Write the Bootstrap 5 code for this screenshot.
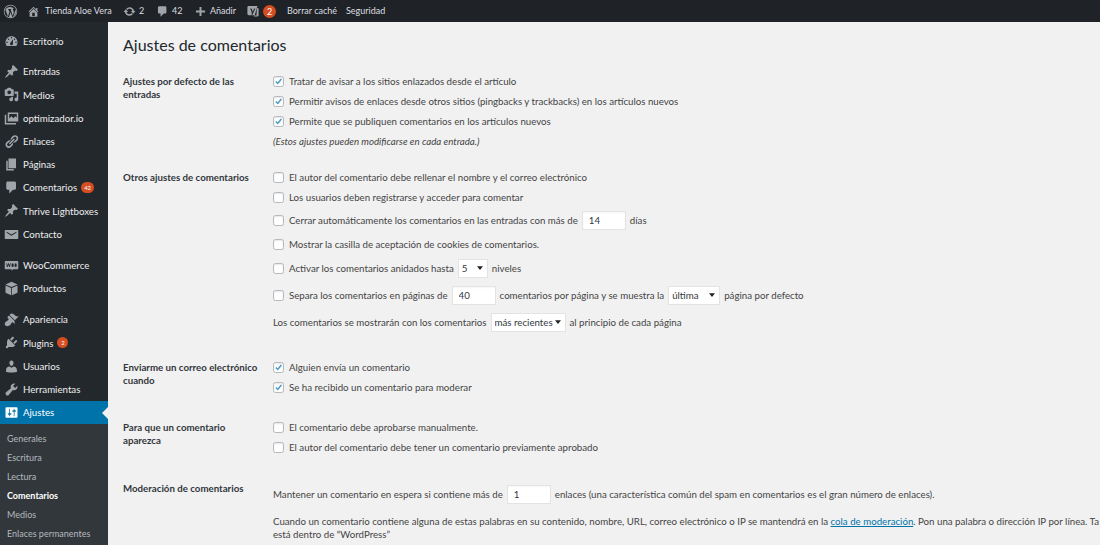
<!DOCTYPE html>
<html lang="es">
<head>
    <meta charset="UTF-8">
    <meta name="viewport" content="width=device-width, initial-scale=1.0">
    <title>Ajustes de comentarios</title>
    <link href="https://cdn.jsdelivr.net/npm/bootstrap@5.3.0/dist/css/bootstrap.min.css" rel="stylesheet">
    <style>
        html, body { height: 100%; overflow: hidden; }
        body { background: #f1f1f1; font-family: Lato, Roboto, sans-serif; font-size: 9.7px; color: #444; line-height: 1.3; }
        svg { fill: currentColor; flex: none; }

        /* top bar */
        .wp-bar { height: 22px; background: #1f2327; color: #dcdee0; padding-left: 3px; white-space: nowrap; font-size: 9px; }
        .wp-bar svg { color: #a0a5aa; }
        .bar-home { margin-left: 9px; }
        .bar-site { margin-left: 5px; width: 78px; }
        .bar-count { margin-left: 3px; width: 17px; }
        .bar-count2 { margin-left: 3px; width: 22px; }
        .bar-add { margin-left: 3px; width: 36px; }
        .bar-cache { margin-left: 11px; width: 59px; }
        .bubble { background: #d54e21; color: #fff; border-radius: 50%; width: 13px; height: 13px; font-size: 9px; line-height: 13px; text-align: center; margin-left: 3px; }

        /* sidebar */
        .wp-side { width: 108px; flex: none; background: #23282d; color: #eee; padding-top: 8px; }
        .side-item { height: 23.2px; padding-left: 4px; gap: 4px; }
        .side-item svg { color: #a0a5aa; width: 15px; height: 15px; }
        .side-sep { margin-top: 7px; }
        .side-sep-wide { margin-top: 8px; }
        .side-now { background: #0073aa; color: #fff; position: relative; }
        .side-now svg { color: #fff; }
        .side-now::after { content: ""; position: absolute; right: 0; top: 6px; border: 6px solid transparent; border-left-width: 0; border-right-color: #f1f1f1; }
        .side-sub { background: #32373c; color: #b4b9be; padding: 5px 0 20px 7px; font-size: 9px; }
        .side-sub div { height: 19px; line-height: 19px; }
        .side-sub .sub-now { color: #fff; font-weight: 700; }
        .count-pill { background: #d54e21; color: #fff; border-radius: 7px; font-size: 6px; height: 11px; line-height: 11px; padding: 0 3px; min-width: 11px; text-align: center; }

        /* content */
        .wp-main { padding-left: 15px; min-width: 0; flex: 1; overflow: hidden; }
        .wp-title { font-size: 16px; font-weight: 400; color: #23282d; margin: 13px 0 16px; line-height: 20px; }
        .set-label { width: 150px; flex: none; font-weight: 700; color: #32373c; padding: 4px 12px 0 0; line-height: 13px; }
        .gap-16 { margin-bottom: 16px; }
        .gap-22 { margin-bottom: 22px; }
        .gap-20 { margin-bottom: 20px; }
        .gap-21 { margin-bottom: 21px; }
        .opt { height: 20px; white-space: nowrap; }
        .opt-22 { height: 22px; }
        .opt-26 { height: 26px; }
        .opt-28 { height: 28px; }
        .opt-32 { height: 32px; }
        .opt-note { font-style: italic; }
        .box { width: 11px; height: 11px; margin: 0 5px 0 0; flex: none; border: 1px solid #b4b9be; border-radius: 0; box-shadow: inset 0 1px 2px rgba(0,0,0,.1); }
        .box:checked { background-color: #fff; border-color: #b4b9be; background-image: url("data:image/svg+xml,%3csvg xmlns='http://www.w3.org/2000/svg' viewBox='0 0 12 12'%3e%3cpath fill='none' stroke='%234a9cc5' stroke-width='2' d='M2.5 6l2.5 2.6L9.8 2.6'/%3e%3c/svg%3e"); }
        .num { height: 19px; border: 1px solid #e3e3e3; background: #fff; color: #32373c; font: inherit; padding: 0 6px; margin: 0 4px; border-radius: 0; box-shadow: inset 0 1px 2px rgba(0,0,0,.04); }
        .num-44 { width: 44px; }
        .pick { height: 19px; border: 1px solid #e3e3e3; border-radius: 0; color: #32373c; font: inherit; padding: 0 8px 0 3px; margin: 0 4px; background-size: 6px 4px; background-position: right 4px center; background-image: url("data:image/svg+xml,%3csvg xmlns='http://www.w3.org/2000/svg' viewBox='0 0 8 5'%3e%3cpath fill='%23222' d='M0 0h8L4 5z'/%3e%3c/svg%3e"); }
        .pick-30 { width: 30px; }
        .pick-52 { width: 52px; }
        .pick-75 { width: 75px; }
        .para-text { white-space: nowrap; margin: 4.5px 0 0; line-height: 13px; }
        .para-text a { color: #0073aa; }
    </style>
</head>
<body>
    <!-- icon set -->
    <svg width="0" height="0" class="d-block">
        <symbol id="i-wp" viewBox="0 0 20 20"><path fill-rule="evenodd" d="M10 1a9 9 0 1 1 0 18a9 9 0 0 1 0-18zm0 1a8 8 0 1 0 0 16a8 8 0 0 0 0-16zM3.200 7.200l3.400 9.300 2-5.900-1.100-3.100-1-.1v-.8h4.700v.8l-1 .1 2.800 8.200.9-2.800c.5-1.500.6-2.300.3-3.200-.3-.9-1-1.300-1-2.200 0-.9.700-1.500 1.500-1.500A7.500 7.500 0 0 0 3.200 7.200zM10.100 11l-2.200 6.400a7.500 7.500 0 0 0 4.500-.1zM16.400 6.500c.3 2-.2 3.400-.7 4.900l-2.100 5.500a7.500 7.500 0 0 0 2.800-10.400z"/></symbol>
        <symbol id="i-home" viewBox="0 0 20 20"><path d="M16 8.500l1.530 1.530-1.060 1.060L10 4.620l-6.470 6.470-1.060-1.060L10 2.500l4 4v-2h2v4zm-6-2.460l6 5.990V18H4v-5.970zM12 17v-5H8v5h4z"/></symbol>
        <symbol id="i-update" viewBox="0 0 20 20"><path d="M10.200 3.280c3.530 0 6.430 2.610 6.920 6h2.080l-3.500 4-3.500-4h2.320a4.439 4.439 0 0 0-4.320-3.450c-1.450 0-2.730.71-3.540 1.780L4.950 5.660a6.965 6.965 0 0 1 5.250-2.380zm-.4 13.440c-3.520 0-6.430-2.610-6.920-6H.8l3.500-4c1.170 1.330 2.330 2.670 3.500 4H5.480a4.439 4.439 0 0 0 4.320 3.450c1.450 0 2.730-.71 3.540-1.780l1.710 1.950a6.950 6.950 0 0 1-5.250 2.380z"/></symbol>
        <symbol id="i-comment" viewBox="0 0 20 20"><path d="M5 2h9c1.100 0 2 .9 2 2v7c0 1.100-.9 2-2 2h-2l-5 5v-5H5c-1.100 0-2-.9-2-2V4c0-1.100.9-2 2-2z"/></symbol>
        <symbol id="i-plus" viewBox="0 0 20 20"><path d="M17 8.500v3h-5.500V17h-3v-5.500H3v-3h5.500V3h3v5.500z"/></symbol>
        <symbol id="i-yoast" viewBox="0 0 20 20"><path d="M4 3h12.500l-1 2.500-3 10.500H4a2 2 0 0 1-2-2V5a2 2 0 0 1 2-2zm2 3.500l2.500 6.500-.8 2.500h1.600l3.900-9h-1.700l-1.800 4.700-1.800-4.700zM15.500 6H18v10a2 2 0 0 1-2 2h-5l.5-1.500H15z"/></symbol>
        <symbol id="i-dash" viewBox="0 0 20 20"><path d="M3.760 16h12.480c1.100-1.370 1.760-3.110 1.760-5 0-4.420-3.580-8-8-8s-8 3.580-8 8c0 1.890.66 3.630 1.760 5zM10 4c.55 0 1 .45 1 1s-.45 1-1 1-1-.45-1-1 .45-1 1-1zM6 6c.55 0 1 .45 1 1s-.45 1-1 1-1-.45-1-1 .45-1 1-1zm8 0c.55 0 1 .45 1 1s-.45 1-1 1-1-.45-1-1 .45-1 1-1zm-5.370 5.550L12 7v6c0 1.100-.9 2-2 2s-2-.9-2-2c0-.57.24-1.080.63-1.450zM4 10c.55 0 1 .45 1 1s-.45 1-1 1-1-.45-1-1 .45-1 1-1zm12 0c.55 0 1 .45 1 1s-.45 1-1 1-1-.45-1-1 .45-1 1-1z"/></symbol>
        <symbol id="i-pin" viewBox="0 0 20 20"><path d="M10.440 3.020l1.820-1.820 6.360 6.350-1.830 1.820c-1.050-.68-2.480-.57-3.410.36l-.75.75c-.92.93-1.040 2.350-.35 3.410l-1.830 1.820-2.410-2.410-2.800 2.790c-.42.42-3.380 2.710-3.800 2.290s1.860-3.390 2.280-3.810l2.790-2.790L4.100 9.360l1.830-1.820c1.050.69 2.480.57 3.400-.36l.75-.75c.93-.92 1.050-2.350.36-3.410z"/></symbol>
        <symbol id="i-media" viewBox="0 0 20 20"><path d="M13 11V4c0-.55-.45-1-1-1h-1.670L9 1H5L3.670 3H2c-.55 0-1 .45-1 1v7c0 .55.45 1 1 1h10c.55 0 1-.45 1-1zM7 4.500c1.380 0 2.500 1.120 2.500 2.500S8.380 9.500 7 9.500 4.500 8.380 4.500 7 5.620 4.500 7 4.500zM14 6h5v10.500c0 1.380-1.120 2.500-2.500 2.500S14 17.880 14 16.500s1.120-2.500 2.500-2.500c.17 0 .34.020.5.050V9h-3V6zm-4 8.050V13h2v3.500c0 1.380-1.120 2.500-2.500 2.500S7 17.880 7 16.500 8.120 14 9.500 14c.17 0 .34.020.5.050z"/></symbol>
        <symbol id="i-image" viewBox="0 0 20 20"><path d="M5 2h14v12H5zm2 2v6l3-3 2.500 2.500L15 7l2 2V4zM1 5h2v11h13v2H1z"/></symbol>
        <symbol id="i-link" viewBox="0 0 20 20"><path d="M17.740 2.760c1.680 1.690 1.680 4.410 0 6.100l-1.530 1.520c-1.120 1.120-2.700 1.470-4.140 1.090l2.620-2.610.76-.77.76-.76c.84-.84.84-2.200 0-3.040-.84-.85-2.200-.85-3.040 0l-.77.76-3.380 3.380c-.37-1.440-.02-3.020 1.100-4.140l1.520-1.530c1.690-1.680 4.420-1.680 6.100 0zM8.590 13.430l5.340-5.340c.42-.42.42-1.100 0-1.520-.44-.43-1.130-.39-1.530 0l-5.330 5.340c-.42.42-.42 1.100 0 1.520.44.43 1.130.39 1.520 0zm-.76 2.290l4.140-4.150c.38 1.440.03 3.020-1.090 4.140l-1.520 1.530c-1.690 1.680-4.410 1.680-6.100 0-1.680-1.680-1.680-4.420 0-6.100l1.530-1.520c1.120-1.120 2.700-1.470 4.140-1.100l-4.140 4.150c-.85.84-.85 2.200 0 3.050.84.84 2.200.84 3.040 0z"/></symbol>
        <symbol id="i-page" viewBox="0 0 20 20"><path d="M6 15V2h10v13H6zm-1 1h8v2H3V5h2v11z"/></symbol>
        <symbol id="i-mail" viewBox="0 0 20 20"><path fill-rule="evenodd" d="M2 4h16a1 1 0 0 1 1 1v10a1 1 0 0 1-1 1H2a1 1 0 0 1-1-1V5a1 1 0 0 1 1-1zm1.500 2.200v1.500L10 11.500l6.500-3.800V6.200L10 10z"/></symbol>
        <symbol id="i-woo" viewBox="0 0 20 20"><path fill-rule="evenodd" d="M2 4h16a1 1 0 0 1 1 1v9a1 1 0 0 1-1 1h-6l-1.500 2L10 15H2a1 1 0 0 1-1-1V5a1 1 0 0 1 1-1zm1 3l1 5h1l1-3 1 3h1l1-5H8l-.6 3-1-3h-.8l-1 3L4 7zm8.500 0a1.500 2.500 0 1 0 0 5 1.500 2.500 0 0 0 0-5zm4 0a1.500 2.500 0 1 0 0 5 1.500 2.500 0 0 0 0-5z"/></symbol>
        <symbol id="i-box" viewBox="0 0 20 20"><path d="M10 1l8 3.500-8 3.500-8-3.500zM2 6l7.500 3.300V19L2 15.500zm16 0v9.500L10.500 19V9.300z"/></symbol>
        <symbol id="i-brush" viewBox="0 0 20 20"><path d="M14.480 11.060L7.410 3.990l1.500-1.500c.5-.56 2.300-.47 3.510.32 1.210.8 1.430 1.280 2.910 2.100 1.180.64 2.450 1.260 4.450.85zm-.71.71L6.700 4.700 4.930 6.470c-.39.39-.39 1.020 0 1.410l1.060 1.060c.39.39.39 1.030 0 1.420-.6.6-1.430 1.110-2.210 1.690-.35.26-.7.53-1.010.84C1.430 13.230.2 16.300 2 18s4.770.57 6.110-.77c.31-.31.58-.66.84-1.010.58-.78 1.090-1.610 1.690-2.210.39-.39 1.020-.39 1.410 0l1.060 1.060c.39.39 1.020.39 1.410 0z"/></symbol>
        <symbol id="i-plug" viewBox="0 0 20 20"><path d="M13.110 4.360L9.870 7.600 8 5.730l3.240-3.240c.35-.34 1.050-.2 1.560.32.52.51.66 1.210.31 1.550zm-8 1.770l.91-1.120 9.010 9.010-1.190.84c-.71.71-2.630 1.160-3.820 1.160H6.140L4.900 17.260c-.59.59-1.540.59-2.120 0-.59-.58-.59-1.530 0-2.120l1.240-1.240v-3.880c0-1.130.4-3.190 1.090-3.890zm7.260 3.970l3.240-3.240c.34-.35 1.040-.21 1.550.31.52.51.66 1.210.31 1.550l-3.240 3.250z"/></symbol>
        <symbol id="i-user" viewBox="0 0 20 20"><path d="M10 9.250c-2.270 0-2.730-3.440-2.730-3.440C7 4.020 7.820 2 9.970 2c2.160 0 2.980 2.020 2.710 3.810 0 0-.41 3.440-2.680 3.440zm0 2.570L12.720 10c2.390 0 4.520 2.330 4.520 4.530v2.490s-3.650 1.130-7.240 1.130c-3.650 0-7.240-1.130-7.240-1.130v-2.490c0-2.250 1.940-4.480 4.470-4.480z"/></symbol>
        <symbol id="i-tool" viewBox="0 0 20 20"><path d="M16.680 9.770c-1.340 1.340-3.300 1.670-4.950.99l-5.410 6.520c-.99.99-2.590.99-3.580 0s-.99-2.590 0-3.570l6.520-5.420c-.68-1.650-.35-3.610.99-4.950 1.280-1.280 3.120-1.620 4.720-1.060l-2.890 2.890 2.820 2.820 2.860-2.870c.53 1.580.18 3.390-1.080 4.650z"/></symbol>
        <symbol id="i-set" viewBox="0 0 20 20"><path d="M18 16V4c0-.55-.45-1-1-1H3c-.55 0-1 .45-1 1v12c0 .55.45 1 1 1h14c.55 0 1-.45 1-1zM8 11h1c.55 0 1 .45 1 1s-.45 1-1 1H8v1.500c0 .28-.22.5-.5.5s-.5-.22-.5-.5V13H6c-.55 0-1-.45-1-1s.45-1 1-1h1V5.500c0-.28.22-.5.5-.5s.5.22.5.5V11zm5-2h-1c-.55 0-1-.45-1-1s.45-1 1-1h1V5.500c0-.28.22-.5.5-.5s.5.22.5.5V7h1c.55 0 1 .45 1 1s-.45 1-1 1h-1v5.500c0 .28-.22.5-.5.5s-.5-.22-.5-.5V9z"/></symbol>
    </svg>

    <!-- Top bar -->
    <div class="wp-bar d-flex align-items-center">
        <svg width="15" height="15"><use href="#i-wp"/></svg>
        <svg class="bar-home" width="13" height="13"><use href="#i-home"/></svg>
        <span class="bar-site">Tienda Aloe Vera</span>
        <svg width="13" height="13"><use href="#i-update"/></svg>
        <span class="bar-count">2</span>
        <svg width="13" height="13"><use href="#i-comment"/></svg>
        <span class="bar-count2">42</span>
        <svg width="13" height="13"><use href="#i-plus"/></svg>
        <span class="bar-add">Añadir</span>
        <svg width="14" height="14"><use href="#i-yoast"/></svg>
        <span class="bubble">2</span>
        <span class="bar-cache">Borrar caché</span>
        <span>Seguridad</span>
    </div>

    <div class="d-flex">
        <!-- Sidebar -->
        <div class="wp-side">
            <div class="side-item d-flex align-items-center"><svg><use href="#i-dash"/></svg>Escritorio</div>
            <div class="side-item side-sep d-flex align-items-center"><svg><use href="#i-pin"/></svg>Entradas</div>
            <div class="side-item d-flex align-items-center"><svg><use href="#i-media"/></svg>Medios</div>
            <div class="side-item d-flex align-items-center"><svg><use href="#i-image"/></svg>optimizador.io</div>
            <div class="side-item d-flex align-items-center"><svg><use href="#i-link"/></svg>Enlaces</div>
            <div class="side-item d-flex align-items-center"><svg><use href="#i-page"/></svg>Páginas</div>
            <div class="side-item d-flex align-items-center"><svg><use href="#i-comment"/></svg>Comentarios <span class="count-pill">42</span></div>
            <div class="side-item d-flex align-items-center"><svg><use href="#i-pin"/></svg>Thrive Lightboxes</div>
            <div class="side-item d-flex align-items-center"><svg><use href="#i-mail"/></svg>Contacto</div>
            <div class="side-item side-sep-wide d-flex align-items-center"><svg><use href="#i-woo"/></svg>WooCommerce</div>
            <div class="side-item d-flex align-items-center"><svg><use href="#i-box"/></svg>Productos</div>
            <div class="side-item side-sep-wide d-flex align-items-center"><svg><use href="#i-brush"/></svg>Apariencia</div>
            <div class="side-item d-flex align-items-center"><svg><use href="#i-plug"/></svg>Plugins <span class="count-pill">2</span></div>
            <div class="side-item d-flex align-items-center"><svg><use href="#i-user"/></svg>Usuarios</div>
            <div class="side-item d-flex align-items-center"><svg><use href="#i-tool"/></svg>Herramientas</div>
            <div class="side-item side-now d-flex align-items-center"><svg><use href="#i-set"/></svg>Ajustes</div>
            <div class="side-sub">
                <div>Generales</div>
                <div>Escritura</div>
                <div>Lectura</div>
                <div class="sub-now">Comentarios</div>
                <div>Medios</div>
                <div>Enlaces permanentes</div>
            </div>
        </div>

        <!-- Main Content -->
        <div class="wp-main">
            <h1 class="wp-title">Ajustes de comentarios</h1>

            <div class="gap-16 d-flex">
                <div class="set-label">Ajustes por defecto de las entradas</div>
                <div>
                    <div class="opt d-flex align-items-center"><input class="box form-check-input" type="checkbox" checked>Tratar de avisar a los sitios enlazados desde el artículo</div>
                    <div class="opt d-flex align-items-center"><input class="box form-check-input" type="checkbox" checked>Permitir avisos de enlaces desde otros sitios (pingbacks y trackbacks) en los artículos nuevos</div>
                    <div class="opt d-flex align-items-center"><input class="box form-check-input" type="checkbox" checked>Permite que se publiquen comentarios en los artículos nuevos</div>
                    <div class="opt opt-note d-flex align-items-center">(Estos ajustes pueden modificarse en cada entrada.)</div>
                </div>
            </div>

            <div class="gap-22 d-flex">
                <div class="set-label">Otros ajustes de comentarios</div>
                <div>
                    <div class="opt d-flex align-items-center"><input class="box form-check-input" type="checkbox">El autor del comentario debe rellenar el nombre y el correo electrónico</div>
                    <div class="opt d-flex align-items-center"><input class="box form-check-input" type="checkbox">Los usuarios deben registrarse y acceder para comentar</div>
                    <div class="opt opt-26 d-flex align-items-center"><input class="box form-check-input" type="checkbox">Cerrar automáticamente los comentarios en las entradas con más de <input class="num num-44" type="text" value="14"> días</div>
                    <div class="opt opt-22 d-flex align-items-center"><input class="box form-check-input" type="checkbox">Mostrar la casilla de aceptación de cookies de comentarios.</div>
                    <div class="opt opt-26 d-flex align-items-center"><input class="box form-check-input" type="checkbox">Activar los comentarios anidados hasta <select class="pick pick-30 form-select"><option>5</option></select> niveles</div>
                    <div class="opt opt-28 d-flex align-items-center"><input class="box form-check-input" type="checkbox">Separa los comentarios en páginas de <input class="num num-44" type="text" value="40"> comentarios por página y se muestra la <select class="pick pick-52 form-select"><option>última</option></select> página por defecto</div>
                    <div class="opt opt-26 d-flex align-items-center">Los comentarios se mostrarán con los comentarios <select class="pick pick-75 form-select"><option>más recientes</option></select> al principio de cada página</div>
                </div>
            </div>

            <div class="gap-20 d-flex">
                <div class="set-label">Enviarme un correo electrónico cuando</div>
                <div>
                    <div class="opt d-flex align-items-center"><input class="box form-check-input" type="checkbox" checked>Alguien envía un comentario</div>
                    <div class="opt d-flex align-items-center"><input class="box form-check-input" type="checkbox" checked>Se ha recibido un comentario para moderar</div>
                </div>
            </div>

            <div class="gap-21 d-flex">
                <div class="set-label">Para que un comentario aparezca</div>
                <div>
                    <div class="opt d-flex align-items-center"><input class="box form-check-input" type="checkbox">El comentario debe aprobarse manualmente.</div>
                    <div class="opt d-flex align-items-center"><input class="box form-check-input" type="checkbox">El autor del comentario debe tener un comentario previamente aprobado</div>
                </div>
            </div>

            <div class="d-flex">
                <div class="set-label">Moderación de comentarios</div>
                <div>
                    <div class="opt opt-32 d-flex align-items-center">Mantener un comentario en espera si contiene más de <input class="num num-44" type="text" value="1"> enlaces (una característica común del spam en comentarios es el gran número de enlaces).</div>
                    <p class="para-text">Cuando un comentario contiene alguna de estas palabras en su contenido, nombre, URL, correo electrónico o IP se mantendrá en la <a href="#">cola de moderación</a>. Pon una palabra o dirección IP por línea. Ta<br>está dentro de “WordPress”</p>
                </div>
            </div>
        </div>
    </div>

    <script src="https://cdn.jsdelivr.net/npm/bootstrap@5.3.0/dist/js/bootstrap.bundle.min.js"></script>
</body>
</html>
